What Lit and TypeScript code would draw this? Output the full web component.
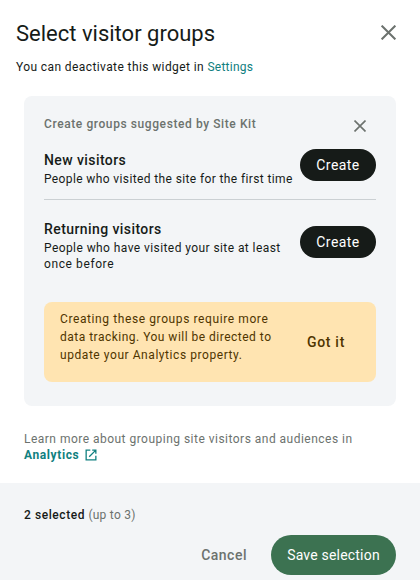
import { LitElement, html, css } from "lit";
import { customElement } from "lit/decorators.js";

const cross = (size: number, width: number) => html`
  <svg width=${size} height=${size} viewBox="0 0 14 14" fill="none" stroke="currentColor" stroke-width=${width}>
    <path d="M.6 .6 13.4 13.4M13.4 .6 .6 13.4" />
  </svg>`;

@customElement("app-root")
export class AppRoot extends LitElement {
  static styles = css`
    :host {
      display: flex;
      flex-direction: column;
      box-sizing: border-box;
      height: 580px;
      overflow: hidden;
      background: #fff;
      color: #161b18;
      font: 400 12px/16px Roboto, "Liberation Sans", sans-serif;
      letter-spacing: 0.4px;
    }
    svg { display: block; }
    button {
      border: 0;
      margin: 0;
      padding: 0;
      background: none;
      color: inherit;
      font: inherit;
      letter-spacing: inherit;
      white-space: nowrap;
    }
    a { color: #108080; text-decoration: none; }
    header { display: flex; justify-content: space-between; padding: 20px 24px 0 16px; height: 39px; }
    h1 { margin: 0; font: 400 22px/28px Roboto, sans-serif; letter-spacing: 0; white-space: nowrap; }
    .close { height: 16px; margin-top: 4px; color: #6c726e; }
    .intro { margin: 0 16px; height: 37px; white-space: nowrap; }
    .settings { letter-spacing: 0.25px; }
    .panel {
      box-sizing: border-box;
      height: 310px;
      margin: 0 24px;
      padding: 20px;
      border-radius: 8px;
      background: #f3f5f7;
    }
    .panelhead {
      display: flex;
      justify-content: space-between;
      height: 35px;
      color: #6c726e;
      font-weight: 500;
      letter-spacing: 0.59px;
    }
    .panelhead button { height: 12px; margin: 4px 10px 0 0; }
    .group { display: flex; justify-content: space-between; box-sizing: border-box; }
    .group.first { height: 49px; border-bottom: 1px solid #cbd0d3; }
    .group.second { height: 102px; padding-top: 20px; }
    .name {
      height: 20px;
      margin-top: -1px;
      padding-bottom: 1px;
      font: 500 14px/20px Roboto, sans-serif;
      letter-spacing: 0.42px;
    }
    .desc { white-space: nowrap; letter-spacing: 0.38px; }
    .second .desc { letter-spacing: 0.42px; }
    .second .tail { letter-spacing: 0.6px; }
    .create {
      width: 76px;
      height: 32px;
      margin-top: -2px;
      border-radius: 16px;
      background: #161b18;
      color: #fff;
      font-size: 14px;
      letter-spacing: 0.45px;
      flex: none;
    }
    .second .create { margin-top: 6px; }
    .notice {
      display: flex;
      justify-content: space-between;
      box-sizing: border-box;
      height: 80px;
      padding: 8px 31px 0 16px;
      border-radius: 8px;
      background: #ffe4b1;
      color: #4f3500;
      line-height: 18px;
      letter-spacing: 0.49px;
      white-space: nowrap;
    }
    .lead { letter-spacing: 0.6px; }
    .end { letter-spacing: 0.56px; }
    .gotit { height: 20px; margin-top: 22px; font-weight: 500; font-size: 14px; letter-spacing: 0.7px; }
    .learn { margin: 25px 24px 0; height: 52px; color: #6c726e; letter-spacing: 0.48px; white-space: nowrap; }
    .learn a { display: flex; gap: 6px; font-weight: 700; letter-spacing: 0.6px; }
    .learn svg { margin-top: 2px; }
    footer { flex: 1; padding: 24px 24px 0; background: #f3f5f7; }
    .count { color: #6c726e; letter-spacing: 0.25px; }
    .count b { color: #161b18; font-weight: 500; letter-spacing: 0.58px; }
    .actions { display: flex; justify-content: flex-end; align-items: center; gap: 24px; margin-top: 12px; font-size: 14px; }
    .cancel { color: #6c726e; font-weight: 500; letter-spacing: 0.5px; }
    .save { width: 125px; height: 40px; border-radius: 20px; background: #3c7251; color: #fff; letter-spacing: 0.2px; }
  `;

  render() {
    return html`
      <header>
        <h1>Select visitor groups</h1>
        <button class="close" aria-label="Close">${cross(15, 1.9)}</button>
      </header>
      <p class="intro">You can deactivate this widget in <a class="settings">Settings</a></p>
      <section class="panel">
        <div class="panelhead">
          <span>Create groups suggested by Site Kit</span>
          <button aria-label="Dismiss">${cross(12, 1.9)}</button>
        </div>
        <div class="group first">
          <div>
            <div class="name">New visitors</div>
            <div class="desc">People who visited the site for the first time</div>
          </div>
          <button class="create">Create</button>
        </div>
        <div class="group second">
          <div>
            <div class="name">Returning visitors</div>
            <div class="desc">People who have visited your site at least<br /><span class="tail">once before</span></div>
          </div>
          <button class="create">Create</button>
        </div>
        <div class="notice">
          <div><span class="lead">Creating these groups require more</span><br />data tracking. You will be directed to<br /><span class="end">update your Analytics property.</span></div>
          <button class="gotit">Got it</button>
        </div>
      </section>
      <div class="learn">
        Learn more about grouping site visitors and audiences in
        <a>Analytics
          <svg width="12" height="12" viewBox="0 0 12 12" fill="none" stroke="currentColor" stroke-width="1.3">
            <path d="M5.3 1.15H1.15v9.7h9.7V6.7M7.2 1.15h3.65V4.8M10.6 1.4 4.2 7.8" />
          </svg>
        </a>
      </div>
      <footer>
        <div class="count"><b>2 selected</b> (up to 3)</div>
        <div class="actions">
          <button class="cancel">Cancel</button>
          <button class="save">Save selection</button>
        </div>
      </footer>
    `;
  }
}
